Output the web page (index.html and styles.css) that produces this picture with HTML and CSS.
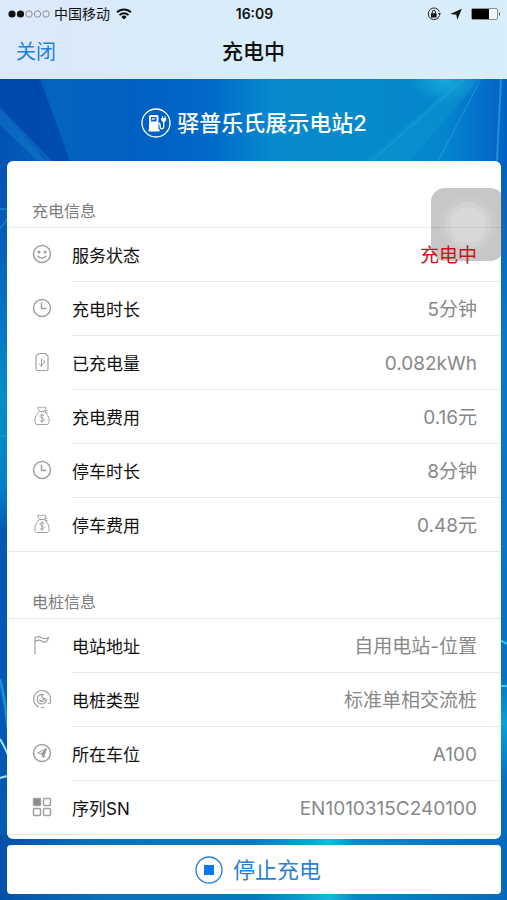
FILE: index.html
```html
<!DOCTYPE html>
<html lang="zh-CN">
<head>
<meta charset="utf-8">
<meta name="viewport" content="width=device-width, initial-scale=1">
<title>充电中</title>
<link rel="stylesheet" href="styles.css">
</head>
<body>
<svg class="sprite" aria-hidden="true">
  <symbol id="clock" viewBox="0 0 20 20"><circle cx="10" cy="10" r="8.5"/><path d="M9.500 4.500v6h5"/></symbol>
  <symbol id="money" viewBox="0 0 20 20"><g stroke-width="1"><path d="M7.500 5.500C5 8 2.800 11 2.800 14.800c0 3 1.200 3.700 3.200 3.700h8c2 0 3.200-.7 3.200-3.700 0-3.800-2.200-6.800-4.700-9.300zM7.500 5.500 5.500 1.500c1.500-.8 2.500.5 4 0s2.500-.5 4.500 0l-1.500 4M12.500 5.500l3-1.500M12.500 5.500l3 1.500"/><path d="M12 9.800c-.5-.8-1.200-1-2-1-1.200 0-2 .6-2 1.500 0 2.200 4.200 1.200 4.200 3.500 0 1-.9 1.600-2.100 1.600-1 0-1.800-.4-2.300-1.200M10 7.500v9.200"/></g></symbol>
</svg>

<header class="topbar">
  <div class="status">
    <div class="carrier">
      <svg class="signal" viewBox="0 0 42 10" aria-hidden="true"><circle cx="4" cy="5" r="3.600" fill="#111"/><circle cx="12.500" cy="5" r="3.600" fill="#111"/><g fill="none" stroke="#777" stroke-width=".8"><circle cx="21" cy="5" r="3.200"/><circle cx="29.500" cy="5" r="3.200"/><circle cx="38" cy="5" r="3.200"/></g></svg>
      <span>中国移动</span>
      <svg class="wifi" viewBox="0 0 16 12" aria-hidden="true"><g fill="none" stroke="#111" stroke-width="1.900"><path d="M1 4.300a10 10 0 0 1 14 0"/><path d="M3.500 7.100a6.400 6.400 0 0 1 9 0"/></g><path d="M5.400 8.900a3.700 3.700 0 0 1 5.200 0L8 11.600z" fill="#111"/></svg>
    </div>
    <time class="time">16:09</time>
    <div class="indicators">
      <svg class="lock" viewBox="0 0 14 14" aria-hidden="true"><path d="M12.600 8.500A5.800 5.800 0 1 1 12.400 4.500" fill="none" stroke="#222" stroke-width="1"/><path d="M11 6h3l-1.500 2.500z" fill="#222"/><rect x="4" y="6.200" width="5.600" height="4.200" rx=".5" fill="#111"/><path d="M5.200 6.500V5a1.600 1.600 0 0 1 3.200 0v1.500" fill="none" stroke="#111"/></svg>
      <svg class="arrow" viewBox="0 0 12 12" aria-hidden="true"><path d="M11.800.8 7.300 11.800 6.300 6.700.3 6z" fill="#111"/></svg>
      <svg class="battery" viewBox="0 0 30 12" aria-hidden="true"><rect x=".5" y=".5" width="26" height="11" rx="1.500" fill="#eef7fc" stroke="#777" stroke-width=".8"/><rect x="1" y="1" width="17" height="10" fill="#000"/><path d="M28 4q2 2 0 4z" fill="#333"/></svg>
    </div>
  </div>
  <nav class="nav">
    <a class="close" href="#">关闭</a>
    <h1 class="title">充电中</h1>
  </nav>
</header>

<main class="page">
  <svg class="backdrop" viewBox="0 0 507 821" preserveAspectRatio="none" aria-hidden="true">
    <defs>
      <linearGradient id="across"><stop offset="0" stop-color="#0052b3"/><stop offset=".1" stop-color="#0464bd"/><stop offset=".3" stop-color="#0060c4"/><stop offset=".42" stop-color="#006bc9"/><stop offset=".54" stop-color="#078ace"/><stop offset=".72" stop-color="#058acb"/><stop offset=".88" stop-color="#0485cd"/><stop offset="1" stop-color="#0361c6"/></linearGradient>
      <linearGradient id="left" x2="0" y2="1"><stop offset="0" stop-color="#0752b0"/><stop offset=".1" stop-color="#075db8"/><stop offset=".32" stop-color="#058dca"/><stop offset=".44" stop-color="#0481c6"/><stop offset=".5" stop-color="#0559b3"/><stop offset=".8" stop-color="#0457b2"/><stop offset="1" stop-color="#0464b5"/></linearGradient>
      <linearGradient id="right" x2="0" y2="1"><stop offset="0" stop-color="#0361bd"/><stop offset=".25" stop-color="#047bd0"/><stop offset=".7" stop-color="#0372c7"/><stop offset=".76" stop-color="#04a2d8"/><stop offset=".84" stop-color="#0471c5"/><stop offset="1" stop-color="#0468bb"/></linearGradient>
      <linearGradient id="foot"><stop offset="0" stop-color="#0450a9"/><stop offset=".2" stop-color="#0872bd"/><stop offset=".5" stop-color="#047abf"/><stop offset=".6" stop-color="#09a1ce"/><stop offset=".65" stop-color="#16b9dc"/><stop offset=".7" stop-color="#078ac9"/><stop offset="1" stop-color="#0469bd"/></linearGradient>
      <radialGradient id="glow"><stop offset="0" stop-color="#18b4dc" stop-opacity=".8"/><stop offset="1" stop-color="#18b4dc" stop-opacity="0"/></radialGradient>
    </defs>
    <rect width="507" height="821" fill="url(#across)"/>
    <path d="M0 0h40l30 82H45L0 30z" fill="#0046ab" opacity=".85"/>
    <path d="M0 28 52 82H38L0 46z" fill="#1683cd" opacity=".4"/>
    <ellipse cx="445" cy="2" rx="35" ry="22" fill="url(#glow)"/>
    <path d="M460 0 365 82h45L480 0z" fill="#12a7d9" opacity=".25"/>
    <g fill="none" stroke="#39b5e3" opacity=".5"><path d="M464 0 372 82"/><path d="M481 0 438 82"/><path d="M501 0 497 82" stroke-width="2"/></g>
    <rect y="82" width="20" height="739" fill="url(#left)"/>
    <rect x="490" y="82" width="17" height="739" fill="url(#right)"/>
    <rect y="756" width="507" height="65" fill="url(#foot)"/>
    <g fill="none" stroke="#20b2df"><path d="M0 130h9M0 149q4-2 8-12M0 357h9" opacity=".8"/><path d="M0 600q5 20 8 50" stroke="#168fd9" stroke-width="3"/><path d="M0 660q5 8 9 18M0 699q5-2 9-2" stroke="#9ce7fa" stroke-width="2"/><path d="M498 560l9 5M498 607h9" stroke="#2ed0ee" stroke-width="2"/></g>
  </svg>

  <div class="station">
    <svg class="station-icon" viewBox="0 0 30 30" aria-hidden="true"><circle cx="15" cy="15" r="14" fill="none" stroke="#fff" stroke-width="1.300"/><path fill="#fff" fill-rule="evenodd" d="M9.500 7h6.500q1.500 0 1.500 1.500V21h1v2.500H7.500V21H8V8.500Q8 7 9.500 7zm.5 2v4.500h5.500V9z"/><path d="M11 12.200l1-2 1 1.300 1-1.500" stroke="#fff" fill="none"/><path d="M17.500 15c2 0 1.500 2 1.800 4.500.3 2 3.400 1.700 3.400-.8V13" fill="none" stroke="#fff" stroke-width="1.300"/><path d="M20.200 10h5v2.200l-1.500 1.800h-2l-1.500-1.800zM21 8.300h1V10h-1zM23.500 8.300h1V10h-1z" fill="#fff"/></svg>
    <h2 class="station-name">驿普乐氏展示电站2</h2>
  </div>

  <div class="card">
    <section>
      <h3 class="section-title">充电信息</h3>
      <dl class="rows">
        <div class="row"><svg class="icon" viewBox="0 0 20 20" aria-hidden="true"><circle cx="10" cy="10" r="8.500"/><path d="M5.500 11.800q4.500 5 9 0"/><circle cx="7" cy="8" r=".8" fill="#999"/><circle cx="13" cy="8" r=".8" fill="#999"/></svg><div class="line"><dt>服务状态</dt><dd class="alert">充电中</dd></div></div>
        <div class="row"><svg class="icon" aria-hidden="true"><use href="#clock"/></svg><div class="line"><dt>充电时长</dt><dd>5分钟</dd></div></div>
        <div class="row"><svg class="icon" viewBox="0 0 20 20" aria-hidden="true"><path d="M6.500 1.500h7l2.500 2.500v13q0 1.500-1.500 1.500h-9Q4 18.500 4 17V4z" stroke-width="1.200"/><path d="M9.500 6.500v8L7 11.800M9.500 13.500 13 10l-2-1.500" stroke-width="1"/></svg><div class="line"><dt>已充电量</dt><dd>0.082kWh</dd></div></div>
        <div class="row"><svg class="icon" aria-hidden="true"><use href="#money"/></svg><div class="line"><dt>充电费用</dt><dd>0.16元</dd></div></div>
        <div class="row"><svg class="icon" aria-hidden="true"><use href="#clock"/></svg><div class="line"><dt>停车时长</dt><dd>8分钟</dd></div></div>
        <div class="row"><svg class="icon" aria-hidden="true"><use href="#money"/></svg><div class="line"><dt>停车费用</dt><dd>0.48元</dd></div></div>
      </dl>
    </section>
    <section>
      <h3 class="section-title">电桩信息</h3>
      <dl class="rows">
        <div class="row"><svg class="icon" viewBox="0 0 20 20" aria-hidden="true"><path d="M3 19V2.500c3-1.500 5-1 7 .5s4 .8 7-.5c-.8 1-1.500 2-2 3.500-2 1.500-4 1.200-5.500 0S6 4.800 3 6.500" stroke-width="1.200"/></svg><div class="line"><dt>电站地址</dt><dd>自用电站-位置</dd></div></div>
        <div class="row"><svg class="icon" viewBox="0 0 20 20" aria-hidden="true"><path d="M12.500 18.200a8.500 8.500 0 0 1-3.500.3M6.800 17.900A8.500 8.500 0 1 1 18.300 12M18.500 11v3l-2.500.5" stroke-width="1.200"/><path d="M11 5.500a4.800 4.800 0 1 0 3.700 5.500H11l2-1.500-3-1q-.5-2 1-3zM7.500 10.500q1 3 4.500 2" stroke-width="1.200"/></svg><div class="line"><dt>电桩类型</dt><dd>标准单相交流桩</dd></div></div>
        <div class="row"><svg class="icon" viewBox="0 0 20 20" aria-hidden="true"><circle cx="10" cy="10" r="8.500"/><path d="M14.500 5.500 11.500 15l-2-4.500-4-.5zM14 6l-4.500 4.500" stroke-width="1"/><path d="M14.500 5.500 11.500 15l-2-4.500z" fill="#999" stroke="none"/></svg><div class="line"><dt>所在车位</dt><dd>A100</dd></div></div>
        <div class="row"><svg class="icon" viewBox="0 0 20 20" aria-hidden="true"><rect x="1.500" y="1.500" width="7" height="7" rx="1" fill="#888"/><rect x="11.500" y="1.500" width="7" height="7" rx="1"/><rect x="1.500" y="11.500" width="7" height="7" rx="1"/><rect x="11.500" y="11.500" width="7" height="7" rx="1"/></svg><div class="line"><dt>序列SN</dt><dd>EN1010315C240100</dd></div></div>
      </dl>
    </section>
  </div>

  <button class="stop" type="button">
    <svg class="stop-icon" viewBox="0 0 28 28" aria-hidden="true"><circle cx="14" cy="14" r="13" fill="none" stroke="#2a7fd8" stroke-width="1.300"/><rect x="9" y="9" width="10" height="10" fill="#0878ea"/></svg>
    <span>停止充电</span>
  </button>
</main>

<button class="assistive" type="button" aria-label="辅助触控"><span class="assistive-dot"></span></button>
</body>
</html>
```

FILE: styles.css
```css
* {
  box-sizing: border-box;
}

body {
  margin: 0;
  min-height: 100vh;
  display: flex;
  flex-direction: column;
  position: relative;
  font-family: Inter, "Noto Sans CJK SC", sans-serif;
  color: #111;
}

h1, h2, h3, dl, dd {
  margin: 0;
  font-weight: 400;
}

svg {
  display: block;
  flex: none;
}

.sprite {
  position: absolute;
  width: 0;
  height: 0;
}

.topbar {
  height: 79px;
  background: linear-gradient(90deg, #dce9fa, #d8ecf9 45%, #d8eefa);
}

.status,
.nav {
  display: grid;
  grid-template-columns: 1fr auto 1fr;
  align-items: center;
}

.status {
  height: 27px;
  padding: 0 6px 0 8px;
  font-size: 14px;
  line-height: 20px;
}

.carrier,
.indicators {
  display: flex;
  align-items: center;
}

.carrier {
  gap: 4px;
}

.indicators {
  justify-content: flex-end;
  gap: 9px;
}

.signal {
  width: 42px;
  height: 10px;
}

.wifi {
  width: 16px;
  height: 12px;
  margin-left: 2px;
}

.time {
  font-weight: 600;
}

.lock {
  width: 14px;
  height: 14px;
}

.arrow {
  width: 12px;
  height: 12px;
}

.battery {
  width: 30px;
  height: 12px;
}

.nav {
  height: 50px;
  padding: 0 16px;
}

.close {
  font-size: 20px;
  line-height: 28px;
  color: #2280dc;
  text-decoration: none;
}

.title {
  font-size: 21px;
  font-weight: 500;
  line-height: 28px;
}

.page {
  position: relative;
  flex: 1;
  display: flex;
  flex-direction: column;
  padding: 0 6px 6px 7px;
  background: #0560bd;
}

.backdrop {
  position: absolute;
  inset: 0;
  width: 100%;
  height: 100%;
}

.station,
.card,
.stop {
  position: relative;
}

.station {
  height: 82px;
  display: flex;
  align-items: center;
  justify-content: center;
  gap: 6px;
  padding-top: 6px;
  color: #fff;
}

.station-icon {
  width: 30px;
  height: 30px;
}

.station-name {
  font-size: 22px;
  font-weight: 500;
  line-height: 30px;
}

.card {
  padding-bottom: 4px;
  background: #fff;
  border-radius: 6px;
}

.section-title {
  height: 67px;
  display: flex;
  align-items: flex-end;
  padding: 0 25px 4px;
  border-bottom: 1px solid #e6e6e6;
  font-size: 16px;
  line-height: 24px;
  color: #7c7c7c;
}

.row {
  display: flex;
  height: 54px;
  padding-left: 25px;
}

.row:last-child {
  border-bottom: 1px solid #e9e9e9;
}

.icon {
  width: 20px;
  height: 20px;
  margin: 16px 20px 0 0;
  fill: none;
  stroke: #a0a0a0;
  stroke-width: 1.5px;
}

.line {
  flex: 1;
  display: flex;
  align-items: center;
  justify-content: space-between;
  padding: 2px 24px 0 0;
  border-bottom: 1px solid #e9e9e9;
  line-height: 26px;
}

.row:last-child .line {
  border-bottom: 0;
}

dt {
  font-size: 17px;
}

dd {
  font-size: 19px;
  color: #888;
}

.alert {
  position: relative;
  z-index: 2;
  color: #c4161c;
}

.stop {
  display: flex;
  align-items: center;
  justify-content: center;
  gap: 10px;
  height: 49px;
  margin-top: 6px;
  padding: 0 0 0 8px;
  border: 0;
  border-radius: 4px;
  background: #fff;
  font: inherit;
  font-size: 22px;
  line-height: 30px;
  color: #2a7fd8;
}

.stop-icon {
  width: 28px;
  height: 28px;
}

.assistive {
  position: absolute;
  z-index: 1;
  top: 188px;
  right: 3px;
  width: 73px;
  height: 73px;
  padding: 0;
  display: grid;
  place-items: center;
  border: 0;
  border-radius: 14px;
  background: rgba(90, 90, 90, 0.34);
}

.assistive-dot {
  width: 36px;
  height: 36px;
  border-radius: 50%;
  background: rgba(255, 255, 255, 0.3);
  box-shadow: 0 0 0 5px rgba(255, 255, 255, 0.14), 0 0 0 10px rgba(255, 255, 255, 0.08);
}
```
